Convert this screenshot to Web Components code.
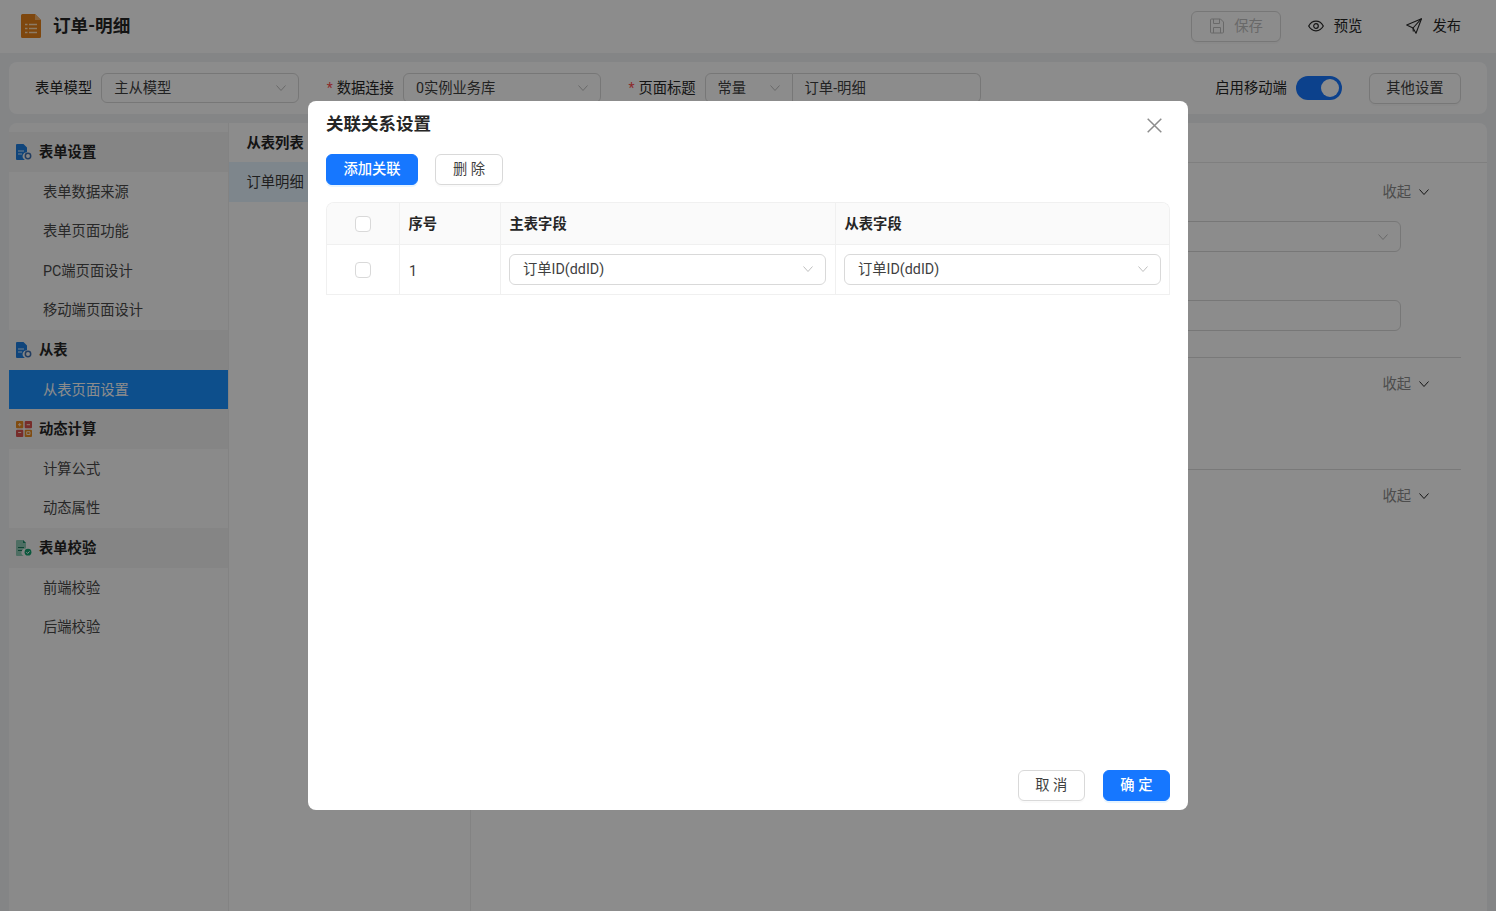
<!DOCTYPE html>
<html lang="zh-CN">
<head>
<meta charset="utf-8">
<title>订单-明细</title>
<style>
  html, body { margin: 0; height: 100%; overflow: hidden; }
  body {
    font-family: Roboto, "Noto Sans CJK SC", sans-serif;
    font-size: 14.3px;
    line-height: 22px;
    color: #262626;
    background: #f0f2f5;
  }
</style>
</head>
<body>
<order-page></order-page>
<script>
const chevron = `<svg width="10" height="10" viewBox="0 0 10 10" fill="none" stroke="currentColor" stroke-width="1"><path d="M.5 2.500 5 7.500 9.500 2.500"/></svg>`;

class UiButton extends HTMLElement {
  constructor() {
    super();
    const shadow = this.attachShadow({ mode: "open" });
    shadow.innerHTML = `
      <style>
      :host { display: inline-flex; }
      button {
        font: inherit; height: 31px; padding: 0 var(--btn-px, 16.5px) var(--btn-pb, 2px);
        border-radius: 6px; border: 1px solid #d9d9d9; background: #fff; color: #3f3f3f;
        display: inline-flex; align-items: center; gap: 9px;
        box-shadow: 0 2px 0 rgba(0,0,0,.02); white-space: nowrap;
      }
      :host([primary]) button {
        background: #1677ff; border-color: #1677ff; color: #fff; font-weight: 500;
        box-shadow: 0 2px 0 rgba(5,145,255,.1);
      }
      :host([disabled]) button { color: #bfbfbf; }
      </style>
      <button><slot></slot></button>`;
  }
}
customElements.define("ui-button", UiButton);

class UiSelect extends HTMLElement {
  constructor() {
    super();
    const shadow = this.attachShadow({ mode: "open" });
    shadow.innerHTML = `
      <style>
      :host {
        display: flex; align-items: center; box-sizing: border-box;
        height: 31px; padding: 0 12px; background: #fff;
        border: 1px solid #d9d9d9; border-radius: 6px; color: #3f3f3f;
      }
      .value { flex: 1; white-space: nowrap; overflow: hidden; }
      .arrow { display: flex; color: #bfbfbf; }
      </style>
      <span class="value"><slot></slot></span>
      <span class="arrow">${chevron}</span>`;
  }
}
customElements.define("ui-select", UiSelect);

class UiCheckbox extends HTMLElement {
  constructor() {
    super();
    const shadow = this.attachShadow({ mode: "open" });
    shadow.innerHTML = `
      <style>
      :host {
        display: block; box-sizing: border-box; width: 16px; height: 16px;
        border: 1px solid #d9d9d9; border-radius: 4px; background: #fff;
      }
      </style>`;
  }
}
customElements.define("ui-checkbox", UiCheckbox);

class AppHeader extends HTMLElement {
  constructor() {
    super();
    const shadow = this.attachShadow({ mode: "open" });
    shadow.innerHTML = `
      <style>
      :host {
        display: flex; align-items: center; height: 53px; background: #fff;
        padding: 0 35px 0 21px; box-sizing: border-box;
      }
      .logo { display: block; margin-bottom: 1px; }
      h1 { font-size: 17.6px; line-height: 26px; font-weight: 700; margin: 0 0 2px 12px; color: #262626; }
      .actions { margin-left: auto; display: flex; align-items: center; }
      .action { display: flex; align-items: center; gap: 10px; margin-left: 44px; padding-bottom: 2px; color: #262626; }
      ui-button { --btn-px: 17px; }
      ui-button svg { display: block; }
      .action svg { display: block; }
      </style>
      <svg class="logo" width="20" height="24" viewBox="0 0 20 24">
        <path d="M1.5 0H14l6 6v16.500a1.500 1.500 0 0 1-1.500 1.500h-17A1.500 1.500 0 0 1 0 22.500V1.500A1.500 1.500 0 0 1 1.500 0z" fill="#e5811a"/>
        <path d="M14 0l6 6h-6z" fill="#f6b26b"/>
        <path d="M4 10.500h2.500M8 10.500h8M4 14.500h2.500M8 14.500h8M4 18.500h2.500M8 18.500h8" stroke="#ffe0b8" stroke-width="1.500"/>
      </svg>
      <h1>订单-明细</h1>
      <div class="actions">
        <ui-button disabled>
          <svg width="16" height="16" viewBox="0 0 16 16" fill="none" stroke="currentColor"><path d="M1.500 1.500a1 1 0 0 1 1-1h9l3 3v10a1 1 0 0 1-1 1h-11a1 1 0 0 1-1-1z" transform="translate(0 .500)"/><path d="M4.500 1v4.500h6V1M4.500 15v-5.500h7V15"/></svg>
          保存
        </ui-button>
        <div class="action" style="margin-left:27px">
          <svg width="16" height="16" viewBox="0 0 16 16" fill="none" stroke="currentColor" stroke-width="1.200"><path d="M.7 8C2.500 4.700 5 3.200 8 3.200s5.500 1.500 7.300 4.800C13.500 11.300 11 12.800 8 12.800S2.500 11.300.7 8z"/><circle cx="8" cy="8" r="2.300"/></svg>
          预览
        </div>
        <div class="action">
          <svg width="16" height="16" viewBox="0 0 16 16" fill="none" stroke="currentColor" stroke-width="1.100" stroke-linejoin="round"><path d="M.7 7 15.500.7 10 15.300 7 10z"/><path d="M15.500.7 7 10 7.300 13.500"/></svg>
          发布
        </div>
      </div>`;
  }
}
customElements.define("app-header", AppHeader);

class FormToolbar extends HTMLElement {
  constructor() {
    super();
    const shadow = this.attachShadow({ mode: "open" });
    shadow.innerHTML = `
      <style>
      :host {
        display: flex; align-items: center; height: 52px; margin: 9px 9px;
        padding: 0 26px; box-sizing: border-box; background: #fff; border-radius: 8px;
        --btn-pb: 0;
      }
      label { white-space: nowrap; margin-right: 9px; color: #262626; }
      .req { color: #ff4d4f; width: 10px; margin-left: 27.5px; font-size: 14px; }
      ui-select { height: 30px; }
      .model { width: 198px; }
      .conn { width: 198px; }
      .kind { width: 88px; border-radius: 6px 0 0 6px; }
      .title {
        width: 188px; height: 30px; box-sizing: border-box; border: 1px solid #d9d9d9;
        border-left: 0; border-radius: 0 6px 6px 0; padding: 0 12px;
        display: flex; align-items: center; color: #3f3f3f;
      }
      .right { margin-left: auto; display: flex; align-items: center; }
      .switch {
        width: 46px; height: 24px; border-radius: 12px; background: #1677ff;
        margin-right: 27px; display: flex; justify-content: flex-end;
        align-items: center; padding: 0 3px; box-sizing: border-box;
      }
      .knob { width: 18px; height: 18px; border-radius: 50%; background: #fff; }
      </style>
      <label>表单模型</label>
      <ui-select class="model">主从模型</ui-select>
      <span class="req">*</span><label>数据连接</label>
      <ui-select class="conn">0实例业务库</ui-select>
      <span class="req">*</span><label>页面标题</label>
      <ui-select class="kind">常量</ui-select>
      <div class="title">订单-明细</div>
      <div class="right">
        <label>启用移动端</label>
        <div class="switch"><div class="knob"></div></div>
        <ui-button>其他设置</ui-button>
      </div>`;
  }
}
customElements.define("form-toolbar", FormToolbar);

const menuIcons = {
  file: `<svg width="16" height="16" viewBox="0 0 16 16"><path d="M1 0h6.500L11 3.500v4.700a4 4 0 0 0-2.600 7.300L8.800 16H1a1 1 0 0 1-1-1V1a1 1 0 0 1 1-1z" fill="#1e7fe0"/><path d="M2 7h6M2 10h4" stroke="#d7e9fb" stroke-width="1.100"/><circle cx="12" cy="12" r="2.700" fill="none" stroke="#3f6fb0" stroke-width="1.500"/></svg>`,
  calc: `<svg width="16" height="16" viewBox="0 0 16 16"><rect width="7.300" height="7.300" rx="1" fill="#ea8a1f"/><rect x="8.700" width="7.300" height="7.300" rx="1" fill="#d9534f"/><rect y="8.700" width="7.300" height="7.300" rx="1" fill="#d9534f"/><rect x="8.700" y="8.700" width="7.300" height="7.300" rx="1" fill="#ea8a1f"/><path d="M2 3.700h3.300M3.700 2v3.300M10.700 3.700h3.300M2.200 11.500h3M10.700 10.700h3.300v2.800h-3.300z" stroke="#ffe7cf" fill="none"/></svg>`,
  check: `<svg width="16" height="16" viewBox="0 0 16 16"><path d="M1 0h6l3 3v5.500a4 4 0 0 0-2.400 7.500H1a1 1 0 0 1-1-1V1a1 1 0 0 1 1-1z" fill="#8fc9b4"/><path d="M7 0l3 3H7z" fill="#1c8a68"/><path d="M2 7.500h6M2 10.500h4" stroke="#1c7a5c" stroke-width="1.100"/><circle cx="12" cy="12.200" r="3.400" fill="#14a06f"/><path d="M10.400 12.200l1.200 1.200 2-2" stroke="#fff" fill="none"/></svg>`
};

class MenuGroup extends HTMLElement {
  constructor() {
    super();
    const shadow = this.attachShadow({ mode: "open" });
    const icon = menuIcons[this.getAttribute("icon")];
    shadow.innerHTML = `
      <style>
      :host { display: block; }
      .head {
        height: 39.6px; display: flex; align-items: center; gap: 7px; padding-left: 7px;
        background: #f2f2f2; font-weight: 700; color: #262626;
      }
      .head svg { display: block; flex: none; }
      </style>
      <div class="head">${icon}<span>${this.getAttribute("label")}</span></div>
      <slot></slot>`;
  }
}
customElements.define("menu-group", MenuGroup);

class MenuItem extends HTMLElement {
  constructor() {
    super();
    const shadow = this.attachShadow({ mode: "open" });
    shadow.innerHTML = `
      <style>
      :host {
        display: flex; align-items: center; height: 39.6px; padding-left: 34px;
        color: #4a4a4a;
      }
      :host([active]) { background: #1890ff; color: #fff; }
      </style>
      <slot></slot>`;
  }
}
customElements.define("menu-item", MenuItem);

class SideMenu extends HTMLElement {
  constructor() {
    super();
    const shadow = this.attachShadow({ mode: "open" });
    shadow.innerHTML = `
      <style>
      :host {
        display: block; width: 219px; flex: none; padding-top: 9.2px; box-sizing: border-box;
        background: #fcfcfc; border-radius: 8px 0 0 0;
      }
      </style>
      <slot></slot>`;
  }
}
customElements.define("side-menu", SideMenu);

class ListPanel extends HTMLElement {
  constructor() {
    super();
    const shadow = this.attachShadow({ mode: "open" });
    shadow.innerHTML = `
      <style>
      :host {
        display: block; width: 243px; flex: none; box-sizing: border-box; background: #fff;
        border-left: 1px solid #eee; border-right: 1px solid #eee;
      }
      .head { height: 39px; display: flex; align-items: center; padding-left: 17.5px; font-weight: 700; }
      .row { height: 40px; display: flex; align-items: center; padding-left: 17.5px; background: #e6f4ff; color: #3a3a3a; }
      </style>
      <div class="head">从表列表</div>
      <div class="row">订单明细</div>`;
  }
}
customElements.define("list-panel", ListPanel);

class ConfigSection extends HTMLElement {
  constructor() {
    super();
    const shadow = this.attachShadow({ mode: "open" });
    shadow.innerHTML = `
      <style>
      :host { display: block; box-sizing: border-box; border-bottom: 1px solid #dcdcdc; }
      :host([last]) { border-bottom: 0; }
      .fold {
        height: var(--fold-height, 50px); box-sizing: border-box; padding-top: 2px;
        display: flex; align-items: center; justify-content: flex-end;
        gap: 8px; padding-right: 32px; color: #8c8c8c;
      }
      .fold span { display: flex; color: #262626; }
      .fields { padding-right: 60px; }
      </style>
      <div class="fold">收起<span>${chevron}</span></div>
      <div class="fields"><slot></slot></div>`;
  }
}
customElements.define("config-section", ConfigSection);

class ConfigPanel extends HTMLElement {
  constructor() {
    super();
    const shadow = this.attachShadow({ mode: "open" });
    shadow.innerHTML = `
      <style>
      :host { display: block; flex: 1; min-width: 0; background: #fff; border-radius: 0 8px 0 0; }
      .tabs { height: 40px; box-sizing: border-box; border-bottom: 1px solid #e8e8e8; }
      .body { padding: 0 26px 0 100px; }
      .input { height: 31px; box-sizing: border-box; border: 1px solid #d9d9d9; border-radius: 6px; }
      .fields { display: flex; flex-direction: column; gap: 48px; padding-bottom: 26px; margin-top: 2px; }
      .s1 { --fold-height: 56px; }
      .s2 { height: 112px; }
      </style>
      <div class="tabs"></div>
      <div class="body">
        <config-section class="s1">
          <div class="fields">
            <ui-select></ui-select>
            <div class="input"></div>
          </div>
        </config-section>
        <config-section class="s2"></config-section>
        <config-section last></config-section>
      </div>`;
  }
}
customElements.define("config-panel", ConfigPanel);

class RelationTable extends HTMLElement {
  constructor() {
    super();
    const shadow = this.attachShadow({ mode: "open" });
    shadow.innerHTML = `
      <style>
      :host {
        display: grid; grid-template-columns: 73px 101px 335px 1fr;
        border: solid #f0f0f0; border-width: 1px 1px 0 1px; border-radius: 8px 8px 0 0;
        overflow: hidden;
      }
      .cell {
        display: flex; align-items: center; padding: 0 9px; box-sizing: border-box;
        border-right: 1px solid #f0f0f0; border-bottom: 1px solid #f0f0f0; height: 50px; color: #3a3a3a;
      }
      .cell.th { height: 42px; background: #fafafa; font-weight: 700; color: #262626; padding-left: 8.5px; }
      .cell.last { border-right: 0; padding-right: 8px; }
      .cell.mid { justify-content: center; }
      .cell.num { padding-top: 2px; }
      /* select box sits 1px further out than the header text */
      ui-select { flex: 1; margin-left: -1px; padding: 0 12px 1px 13px; }
      </style>
      <div class="cell th mid"><ui-checkbox></ui-checkbox></div>
      <div class="cell th">序号</div>
      <div class="cell th">主表字段</div>
      <div class="cell th last">从表字段</div>
      <div class="cell mid"><ui-checkbox></ui-checkbox></div>
      <div class="cell num">1</div>
      <div class="cell"><ui-select>订单ID(ddID)</ui-select></div>
      <div class="cell last"><ui-select>订单ID(ddID)</ui-select></div>`;
  }
}
customElements.define("relation-table", RelationTable);

class RelationModal extends HTMLElement {
  constructor() {
    super();
    const shadow = this.attachShadow({ mode: "open" });
    shadow.innerHTML = `
      <style>
      :host {
        position: fixed; inset: 0; background: rgba(0,0,0,.45);
        display: flex; justify-content: center; align-items: flex-start; padding-top: 101px;
      }
      .dialog {
        width: 880px; height: 709px; box-sizing: border-box; background: #fff; border-radius: 8px;
        padding: 0 18px 9px; display: flex; flex-direction: column;
      }
      .top { height: 53px; display: flex; justify-content: space-between; align-items: flex-start; }
      h2 { margin: 12px 0 0; font-size: 17.500px; line-height: 22px; font-weight: 700; color: #262626; }
      .close { display: block; margin: 17px 8px 0 0; color: #8c8c8c; }
      .tools { display: flex; gap: 17px; margin-bottom: 17px; }
      .add { --btn-px: 16px; width: 92px; justify-content: center; }
      .del { --btn-px: 17px; }
      .foot { margin-top: auto; display: flex; justify-content: flex-end; gap: 18px; }
      </style>
      <div class="dialog">
        <div class="top">
          <h2>关联关系设置</h2>
          <svg class="close" width="15" height="15" viewBox="0 0 15 15" stroke="currentColor" stroke-width="1.500"><path d="M.7.7l13.600 13.600M14.300.7.7 14.300"/></svg>
        </div>
        <div class="tools">
          <ui-button primary class="add">添加关联</ui-button>
          <ui-button class="del">删 除</ui-button>
        </div>
        <relation-table></relation-table>
        <div class="foot">
          <ui-button>取 消</ui-button>
          <ui-button primary>确 定</ui-button>
        </div>
      </div>`;
  }
}
customElements.define("relation-modal", RelationModal);

class OrderPage extends HTMLElement {
  constructor() {
    super();
    const shadow = this.attachShadow({ mode: "open" });
    shadow.innerHTML = `
      <style>
      :host { display: flex; flex-direction: column; height: 911px; overflow: hidden; }
      .main { flex: 1; display: flex; margin: 0 9px; min-height: 0; }
      </style>
      <app-header></app-header>
      <form-toolbar></form-toolbar>
      <div class="main">
        <side-menu>
          <menu-group icon="file" label="表单设置">
            <menu-item>表单数据来源</menu-item>
            <menu-item>表单页面功能</menu-item>
            <menu-item>PC端页面设计</menu-item>
            <menu-item>移动端页面设计</menu-item>
          </menu-group>
          <menu-group icon="file" label="从表">
            <menu-item active>从表页面设置</menu-item>
          </menu-group>
          <menu-group icon="calc" label="动态计算">
            <menu-item>计算公式</menu-item>
            <menu-item>动态属性</menu-item>
          </menu-group>
          <menu-group icon="check" label="表单校验">
            <menu-item>前端校验</menu-item>
            <menu-item>后端校验</menu-item>
          </menu-group>
        </side-menu>
        <list-panel></list-panel>
        <config-panel></config-panel>
      </div>
      <relation-modal></relation-modal>`;
  }
}
customElements.define("order-page", OrderPage);
</script>
</body>
</html>
